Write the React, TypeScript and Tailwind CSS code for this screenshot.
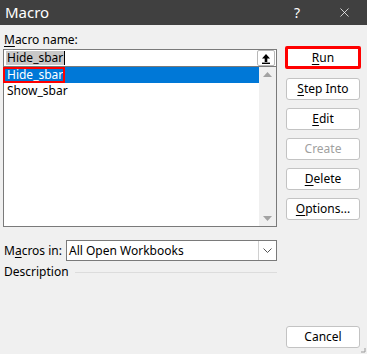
import { X } from "lucide-react";

const Btn = ({
  label,
  u,
  disabled,
  className = "",
}: {
  label: string;
  u?: number;
  disabled?: boolean;
  className?: string;
}) => (
  <button
    className={`h-[22px] w-[74px] rounded-[3px] border border-[#c3c3c3] bg-white text-[12px] leading-none ${
      disabled ? "text-[#a0a0a0]" : "text-black"
    } ${className}`}
  >
    {u === undefined ? (
      label
    ) : (
      <>
        {label.slice(0, u)}
        <span className={disabled ? "" : "underline underline-offset-2"}>{label[u]}</span>
        {label.slice(u + 1)}
      </>
    )}
  </button>
);

export default function App() {
  return (
    <div
      className="relative h-[354px] w-[367px] overflow-hidden bg-[#f0f0f0] text-[12px] text-black"
      style={{ fontFamily: '"Noto Sans", "Open Sans", sans-serif' }}
    >
      {/* TITLE BAR */}
      <div className="flex h-[25px] items-center bg-[#404040] pl-[5px] text-white">
        <span className="text-[15px]">Macro</span>
        <span className="ml-auto mr-[37px] text-[14px]">?</span>
        <X className="mr-[15px] h-[15px] w-[15px]" strokeWidth={1.2} />
      </div>

      <div className="flex px-[3px]">
        {/* LEFT */}
        <div className="flex w-[274px] flex-col">
          <div className="mt-[6px] h-[18px] pl-[1px] leading-[18px]">
            <span className="underline underline-offset-2">M</span>acro name:
          </div>
          {/* NAME BOX */}
          <div className="flex h-[18px] items-center border border-[#7a7a7a] bg-white">
            <span className="ml-[2px] bg-[#c8c8c8] px-[1px] leading-[14px]">Hide_sbar</span>
            <span className="h-[14px] w-px bg-black" />
            <div className="ml-auto mr-[1px] flex h-[16px] w-[18px] items-center justify-center rounded-[2px] border border-[#b8b8b8] bg-white">
              <svg width="10" height="11" viewBox="0 0 10 11">
                <path d="M5 1 L9 5.5 H6.3 V9 H3.7 V5.5 H1 Z" fill="#000" />
                <rect x="1" y="9.6" width="8" height="1.4" fill="#000" />
              </svg>
            </div>
          </div>
          {/* LIST */}
          <div className="flex h-[160px] border border-t-0 border-[#7a7a7a] bg-white">
            <div className="flex flex-1 flex-col">
              <div className="relative h-[16px] bg-[#0078d7] pl-[3px] leading-[16px] text-white">
                Hide_sbar
                <div className="absolute left-[-1px] top-0 h-[16px] w-[62px] border-2 border-[#ff0000]" />
              </div>
              <div className="h-[16px] pl-[3px] leading-[16px]">Show_sbar</div>
            </div>
            <div className="flex w-[17px] flex-col items-center justify-between bg-[#f0f0f0] py-[5px]">
              <svg width="9" height="5" viewBox="0 0 9 5">
                <path d="M0 5 L4.5 0 L9 5 Z" fill="#a3a3a3" />
              </svg>
              <svg width="9" height="5" viewBox="0 0 9 5">
                <path d="M0 0 L4.5 5 L9 0 Z" fill="#a3a3a3" />
              </svg>
            </div>
          </div>
          {/* MACROS IN */}
          <div className="mt-[13px] flex items-center">
            <span className="w-[63px] pl-[1px]">
              M<span className="underline underline-offset-2">a</span>cros in:
            </span>
            <div className="flex h-[21px] flex-1 items-center border border-[#7a7a7a] bg-white">
              <span className="pl-[2px]">All Open Workbooks</span>
              <div className="ml-auto flex h-full w-[18px] items-center justify-center border-l border-[#d0d0d0]">
                <svg width="9" height="5" viewBox="0 0 9 5">
                  <path d="M0.5 0.5 L4.5 4.5 L8.5 0.5" fill="none" stroke="#555" strokeWidth="1" />
                </svg>
              </div>
            </div>
          </div>
          <div className="mt-[2px] flex items-center">
            <span className="pl-[1px]">Description</span>
            <div className="ml-[6px] h-px flex-1 bg-[#dcdcdc]" />
          </div>
        </div>

        {/* RIGHT */}
        <div className="ml-[8px] flex flex-col">
          <button className="mt-[21px] h-[23px] w-[76px] rounded-[2px] border-[3px] border-[#ff0000] bg-white text-[12px] leading-none">
            <span className="underline underline-offset-2">R</span>un
          </button>
          <div className="flex flex-col gap-[8px] pl-[1px] pt-[9px]">
            <Btn label="Step Into" u={0} />
            <Btn label="Edit" u={0} />
            <Btn label="Create" u={0} disabled />
            <Btn label="Delete" u={0} />
            <Btn label="Options..." u={0} />
          </div>
          <div className="mt-[106px] pl-[1px]">
            <Btn label="Cancel" />
          </div>
        </div>
      </div>

      {/* GRIP */}
      <svg className="absolute bottom-[1px] right-[1px]" width="6" height="6" viewBox="0 0 6 6">
        <path d="M5 1 V5 H1" fill="none" stroke="#9a9a9a" strokeWidth="1" />
      </svg>
    </div>
  );
}
